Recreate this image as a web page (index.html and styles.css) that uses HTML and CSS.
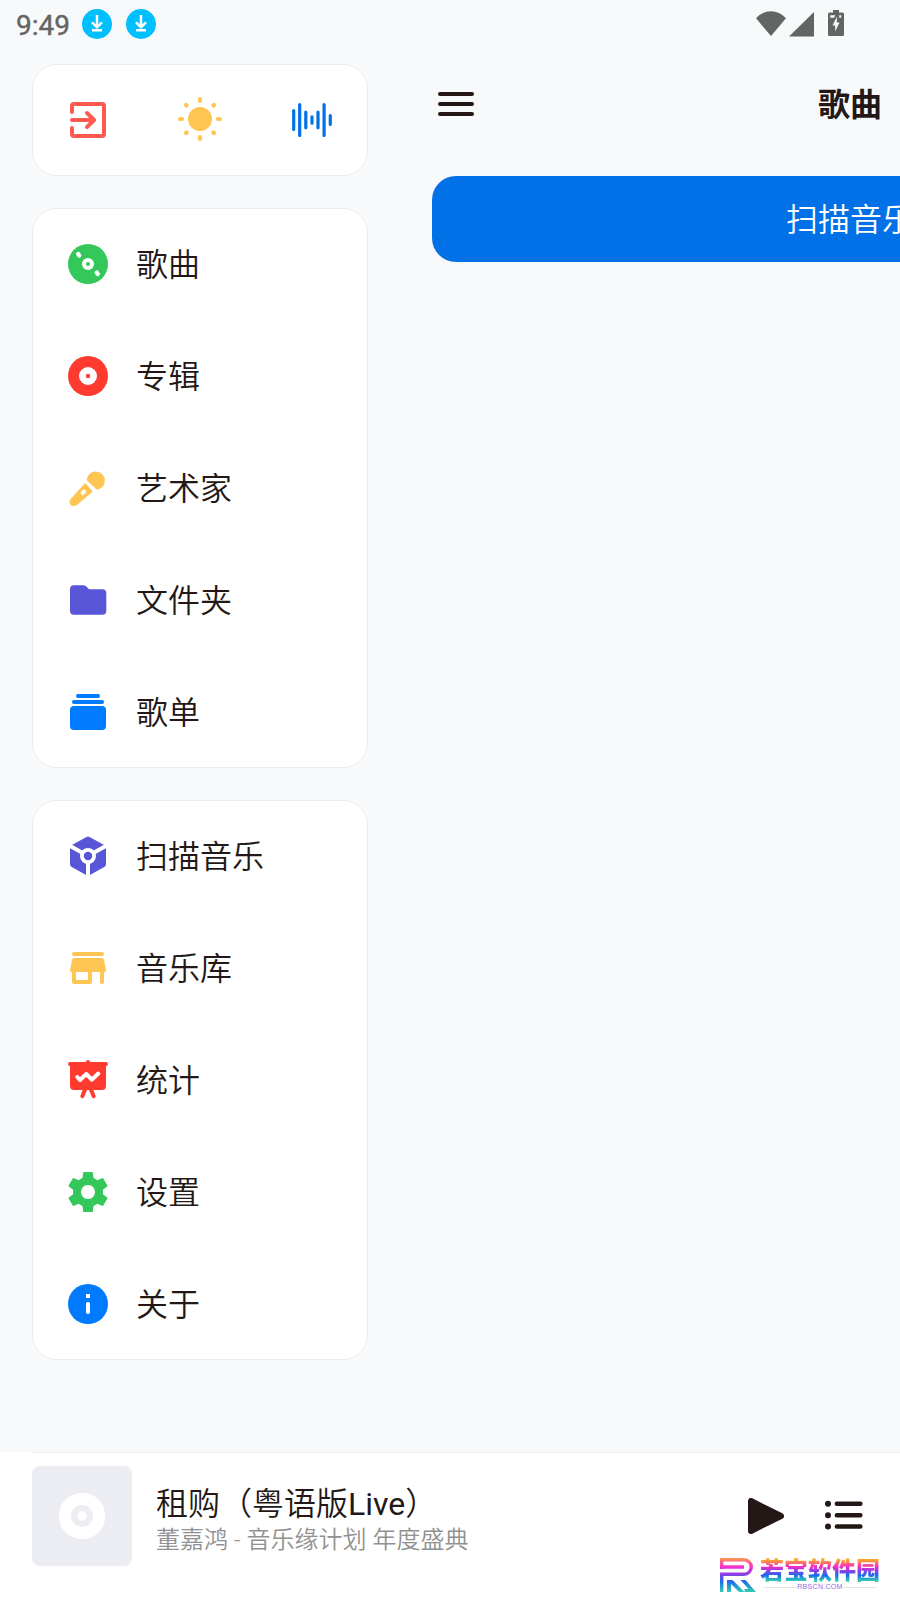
FILE: index.html
```html
<!DOCTYPE html>
<html lang="zh-CN">
  <head>
    <meta charset="UTF-8">
    <title>歌曲</title>
    <link rel="stylesheet" href="styles.css">
  </head>
  <body>
    <div class="status-bar">
      <span class="time">9:49</span>
      <svg class="download" viewBox="0 0 30 30"><circle cx="15" cy="15" r="15" fill="#00bfff"/><path d="M15 6v12M10 13.3l5 5 5-5M10 21.3h10" fill="none" stroke="#fff" stroke-width="2.5"/></svg>
      <svg class="download" viewBox="0 0 30 30"><circle cx="15" cy="15" r="15" fill="#00bfff"/><path d="M15 6v12M10 13.3l5 5 5-5M10 21.3h10" fill="none" stroke="#fff" stroke-width="2.5"/></svg>
      <svg class="signals" viewBox="0 0 90 28" fill="#636564">
        <path d="M0 8.3Q6.500 1.300 15 1.300T30 8.300L15 26z"/>
        <path d="M33 26.500 58 2v24.500z"/>
        <path d="M77 0h6v2.500h3.500a1.500 1.500 0 0 1 1.500 1.500v20.500a1.500 1.500 0 0 1-1.500 1.500h-13a1.500 1.500 0 0 1-1.500-1.500V4a1.500 1.500 0 0 1 1.500-1.500H77z"/>
        <path d="M74.300 5.200h5L78 7.800h-3.700zM83.200 5.200h2v2.600h-2zM81 6.500l-4.500 9h2.700v6l4.300-9h-2.700z" fill="#f8f9fb"/>
      </svg>
    </div>

    <div class="screen">
      <div class="drawer">
        <div class="card tools">
          <svg class="icon" viewBox="0 0 48 48" fill="none" stroke="#ff5a52" stroke-width="4" stroke-linecap="round"><path d="M8 16v-6a2 2 0 0 1 2-2h28a2 2 0 0 1 2 2v28a2 2 0 0 1-2 2H10a2 2 0 0 1-2-2v-6M8 24h22"/><path d="M23 17l7 7-7 7" stroke-linejoin="round"/></svg>
          <svg class="icon" viewBox="0 0 48 48" fill="#ffc552"><circle cx="24" cy="23" r="12"/><path d="M24 3v2M24 41v2M4 23h2M42 23h2M10 9l.600.600M37.400 36.400l.600.600M10 37l.600-.600M37.400 9.600l.600-.600" stroke="#ffc552" stroke-width="4.200" stroke-linecap="round"/></svg>
          <svg class="icon" viewBox="0 0 48 48" fill="none" stroke="#0271e7" stroke-width="3.200" stroke-linecap="round"><path d="M5.700 14.600v18.800M11.700 8.600v30.800M17.800 16.200v15.600M24 20.800v6.400M30 16.200v15.600M36.100 8.600v30.800M42.300 19.500v9"/></svg>
        </div>

        <div class="card">
          <div class="item">
            <svg class="icon" viewBox="0 0 48 48"><circle cx="24" cy="24" r="20" fill="#34c759"/><circle cx="24" cy="24" r="4" fill="none" stroke="#fff" stroke-width="4"/><path d="M14.200 14l1 1.400M32.800 32.600l1 1.400" stroke="#fff" stroke-width="4.300" stroke-linecap="round"/></svg>
            <span>歌曲</span>
          </div>
          <div class="item">
            <svg class="icon" viewBox="0 0 48 48"><circle cx="24" cy="24" r="20" fill="#ff3b30"/><circle cx="24" cy="24" r="9" fill="#fff"/><circle cx="24" cy="24" r="2.200" fill="#ff3b30"/></svg>
            <span>专辑</span>
          </div>
          <div class="item">
            <svg class="icon" viewBox="0 0 48 48" fill="#ffc552"><path d="M22.800 15a9.100 9.100 0 1 1 11.400 10.400q-1 .400-2-.400l-8.800-8q-.800-.800-.600-2z"/><path d="M20.500 19.700q.700-.800 1.500 0l6.100 7q.700.800-.200 1.500L13.300 40.700Q9 43.500 6.500 40.800q-2.300-2.800.300-6z"/><path d="M18.600 29l1.500-1.300" stroke="#fff" stroke-width="4" stroke-linecap="round"/></svg>
            <span>艺术家</span>
          </div>
          <div class="item">
            <svg class="icon" viewBox="0 0 48 48" fill="#5856d6"><path d="M10 9.300h9q2 0 3.300 1.300l2.700 2.700h13.300a4 4 0 0 1 4 4v17.400a4 4 0 0 1-4 4H10a4 4 0 0 1-4-4V13.300a4 4 0 0 1 4-4z"/></svg>
            <span>文件夹</span>
          </div>
          <div class="item">
            <svg class="icon" viewBox="0 0 48 48" fill="#007aff"><rect x="12" y="6" width="24" height="4" rx="2"/><rect x="8" y="12" width="32" height="4" rx="2"/><rect x="6" y="18" width="36" height="24" rx="4"/></svg>
            <span>歌单</span>
          </div>
        </div>

        <div class="card">
          <div class="item">
            <svg class="icon" viewBox="0 0 48 48"><path d="M22.500 5q1.500-1 3 0L42 14v18q0 2-1.700 3L24 44 7.700 35Q6 34 6 32V14z" fill="#5856d6"/><path d="M24 24 4 12.700M24 24l20-11.300M24 24v21" stroke="#fff" stroke-width="4"/><circle cx="24" cy="24" r="8" fill="#fff"/><circle cx="24" cy="24" r="4.200" fill="#5856d6"/></svg>
            <span>扫描音乐</span>
          </div>
          <div class="item">
            <svg class="icon" viewBox="0 0 48 48" fill="#ffc552"><rect x="8" y="8" width="32" height="4" rx="2"/><path d="M10 14h28q1.500 0 1.900 1.600L42 26q.300 2-1.500 2H40v10a2 2 0 0 1-4 0V28h-8v10a2 2 0 0 1-2 2H10a2 2 0 0 1-2-2V28h-.500Q5.700 28 6 26l2.100-10.400Q8.500 14 10 14zM12 28v8h12v-8z"/></svg>
            <span>音乐库</span>
          </div>
          <div class="item">
            <svg class="icon" viewBox="0 0 48 48" fill="#ff3b30"><circle cx="24" cy="6" r="2"/><rect x="4" y="6" width="40" height="4" rx="2"/><path d="M6 8h36v22a4 4 0 0 1-4 4H10a4 4 0 0 1-4-4z"/><path d="M21.300 33l-3 7.200M26.700 33l3 7.200" stroke="#ff3b30" stroke-width="4" stroke-linecap="round"/><path d="M13.300 21l2.700 3 6.300-6 5.400 5.700 6.600-6.200" fill="none" stroke="#fff" stroke-width="4" stroke-linecap="round" stroke-linejoin="round"/></svg>
            <span>统计</span>
          </div>
          <div class="item">
            <svg class="icon" viewBox="0 0 48 48" fill="#34c759">
              <defs><path id="tooth" d="M16.500 12.500q1.700-.800 2-2.500l.600-5.400q.100-.600.800-.600h8.200q.700 0 .800.600l.600 5.400q.300 1.700 2 2.500L24 20z"/></defs>
              <circle cx="24" cy="24" r="11" fill="none" stroke="#34c759" stroke-width="8"/>
              <use href="#tooth"/><use href="#tooth" transform="rotate(60 24 24)"/><use href="#tooth" transform="rotate(120 24 24)"/><use href="#tooth" transform="rotate(180 24 24)"/><use href="#tooth" transform="rotate(240 24 24)"/><use href="#tooth" transform="rotate(300 24 24)"/>
              <circle cx="24" cy="24" r="7" fill="#fff"/>
            </svg>
            <span>设置</span>
          </div>
          <div class="item">
            <svg class="icon" viewBox="0 0 48 48"><circle cx="24" cy="24" r="20" fill="#007aff"/><path d="M22 14h4v4h-4z" fill="#fff"/><rect x="22" y="22" width="4" height="12" rx="1.800" fill="#fff"/></svg>
            <span>关于</span>
          </div>
        </div>
      </div>

      <!-- pushed to the right while the drawer is open -->
      <div class="main">
        <div class="header">
          <svg class="icon" viewBox="0 0 48 48" stroke="#231815" stroke-width="4" stroke-linecap="round"><path d="M8 14h32M8 24h32M8 34h32"/></svg>
          <h1>歌曲</h1>
        </div>
        <button class="scan">扫描音乐</button>
      </div>
    </div>

    <div class="player">
      <svg class="cover" viewBox="0 0 100 100"><rect width="100" height="100" rx="7.500" fill="#ecedf3"/><circle cx="50" cy="50" r="23.200" fill="#fff"/><circle cx="50" cy="50" r="11" fill="#ecedf3"/><circle cx="50" cy="50" r="4.700" fill="#fff"/></svg>
      <div class="info">
        <div class="song">租购（粤语版<span class="latin">Live</span>）</div>
        <div class="artist">董嘉鸿 - 音乐缘计划 年度盛典</div>
      </div>
      <svg class="play" viewBox="0 0 36 36"><path d="M3 3v30L33 18z" fill="#231815" stroke="#231815" stroke-width="6" stroke-linejoin="round"/></svg>
      <svg class="list" viewBox="0 0 38 30" fill="#231815" stroke="#231815" stroke-width="4.400" stroke-linecap="round"><path d="M11.800 3.800h23.600M11.800 15.200h23.600M11.800 26.500h23.600"/><path d="M3 3.800h.010M3 15.200h.010M3 26.500h.010" stroke-width="6"/></svg>
    </div>

    <div class="watermark">
      <svg class="mark" viewBox="0 0 36 34">
        <defs>
          <linearGradient id="rainbow" x1="0" y1="0" x2="0" y2="34" gradientUnits="userSpaceOnUse">
            <stop offset="0" stop-color="#ff9a4a"/>
            <stop offset=".26" stop-color="#fb2bd2"/>
            <stop offset=".48" stop-color="#8a3fe6"/>
            <stop offset=".7" stop-color="#176ff0"/>
            <stop offset="1" stop-color="#35cfae"/>
          </linearGradient>
        </defs>
        <path d="M1.700 11V1.700H24a7.300 7.300 0 0 1 0 14.600H1.700V34M1.700 9H24" fill="none" stroke="url(#rainbow)" stroke-width="3.400"/>
        <path d="M7 22h5.500L24.500 34H19l-8-8v8H7zM20.500 22h5L36 34H24.500v-3h4z" fill="url(#rainbow)"/>
      </svg>
      <div class="site">
        <div class="name">若宝软件园</div>
        <div class="domain">RBSCN.COM</div>
      </div>
    </div>
  </body>
</html>
```
FILE: styles.css
```css
* {
  box-sizing: border-box;
}
body {
  position: relative;
  width: 900px;
  height: 1600px;
  margin: 0;
  display: flex;
  flex-direction: column;
  overflow: hidden;
  background-color: #f8f9fb;
  color: #231815;
  font-family: Roboto, "Noto Sans CJK SC", sans-serif;
  font-weight: 350;
}
svg {
  display: block;
  flex-shrink: 0;
}
.status-bar {
  height: 48px;
  padding: 0 54px 0 16px;
  display: flex;
  align-items: center;
}
.time {
  width: 66px;
  padding-top: 2px;
  font-size: 28px;
  font-weight: 400;
  color: #636564;
  -webkit-text-stroke: .4px #636564;
}
.download {
  width: 30px;
  height: 30px;
  margin-right: 14px;
}
.signals {
  width: 90px;
  height: 28px;
  margin-left: auto;
}
.screen {
  flex: 1;
  display: flex;
}
.drawer {
  width: 400px;
  flex-shrink: 0;
  padding: 16px 32px;
  display: flex;
  flex-direction: column;
  gap: 32px;
}
.card {
  background-color: #fff;
  border: 1px solid #ededee;
  border-radius: 25px;
}
.tools {
  height: 112px;
  padding: 0 31px;
  display: flex;
  justify-content: space-between;
  align-items: center;
}
.icon {
  width: 48px;
  height: 48px;
}
.item {
  height: 112px;
  padding-left: 31px;
  display: flex;
  align-items: center;
  gap: 24px;
  font-size: 32px;
}
.item:first-child {
  height: 111px;
  padding-bottom: 1px;
}
.item:last-child {
  height: 111px;
  padding-top: 1px;
}
.item span {
  padding-top: 2px;
  line-height: 48px;
}
.main {
  width: 900px;
  flex-shrink: 0;
}
.header {
  height: 112px;
  padding: 0 32px;
  display: grid;
  grid-template-columns: 48px 1fr 48px;
  align-items: center;
}
.header h1 {
  margin: 0;
  padding-top: 2px;
  text-align: center;
  font-size: 32px;
  line-height: 48px;
}
.scan {
  display: block;
  width: 836px;
  height: 86px;
  margin: 16px 32px;
  padding: 0 0 5px;
  border: none;
  border-radius: 24px;
  background-color: #0271e7;
  color: #fff;
  font-family: inherit;
  font-weight: inherit;
  font-size: 32px;
}
.player {
  height: 148px;
  padding: 14px 37px 34px 32px;
  display: flex;
  align-items: center;
  background: linear-gradient(#f0f0f1, #f0f0f1) 32px 0 / 100% 1px no-repeat #fff;
}
.cover {
  width: 100px;
  height: 100px;
}
.info {
  flex: 1;
  margin-left: 24px;
  padding-top: 7px;
}
.song {
  font-size: 32px;
  line-height: 40px;
}
.latin {
  font-weight: 400;
}
.artist {
  font-size: 24px;
  line-height: 32px;
  color: #919191;
}
.play {
  width: 36px;
  height: 36px;
}
.list {
  width: 38px;
  height: 30px;
  margin: 0 0 2px 41px;
}
.watermark {
  position: absolute;
  left: 720px;
  top: 1558px;
  display: flex;
  gap: 4px;
}
.mark {
  width: 36px;
  height: 34px;
}
.name {
  padding-top: 1px;
  font-size: 24px;
  line-height: 24px;
  font-weight: 900;
  background: linear-gradient(#ffa526 8%, #f62bc8 35%, #8a3fe6 52%, #176ff0 70%, #35cfae 92%);
  -webkit-background-clip: text;
  background-clip: text;
  color: transparent;
}
.domain {
  padding: 0 3px;
  display: flex;
  align-items: center;
  font-family: "Liberation Sans", sans-serif;
  font-size: 7px;
  font-weight: 400;
  line-height: 8px;
  letter-spacing: .3px;
  color: #9a6bdc;
}
.domain::before,
.domain::after {
  content: "";
  flex: 1;
  height: 1px;
  background-color: #e6e6dc;
}
```
